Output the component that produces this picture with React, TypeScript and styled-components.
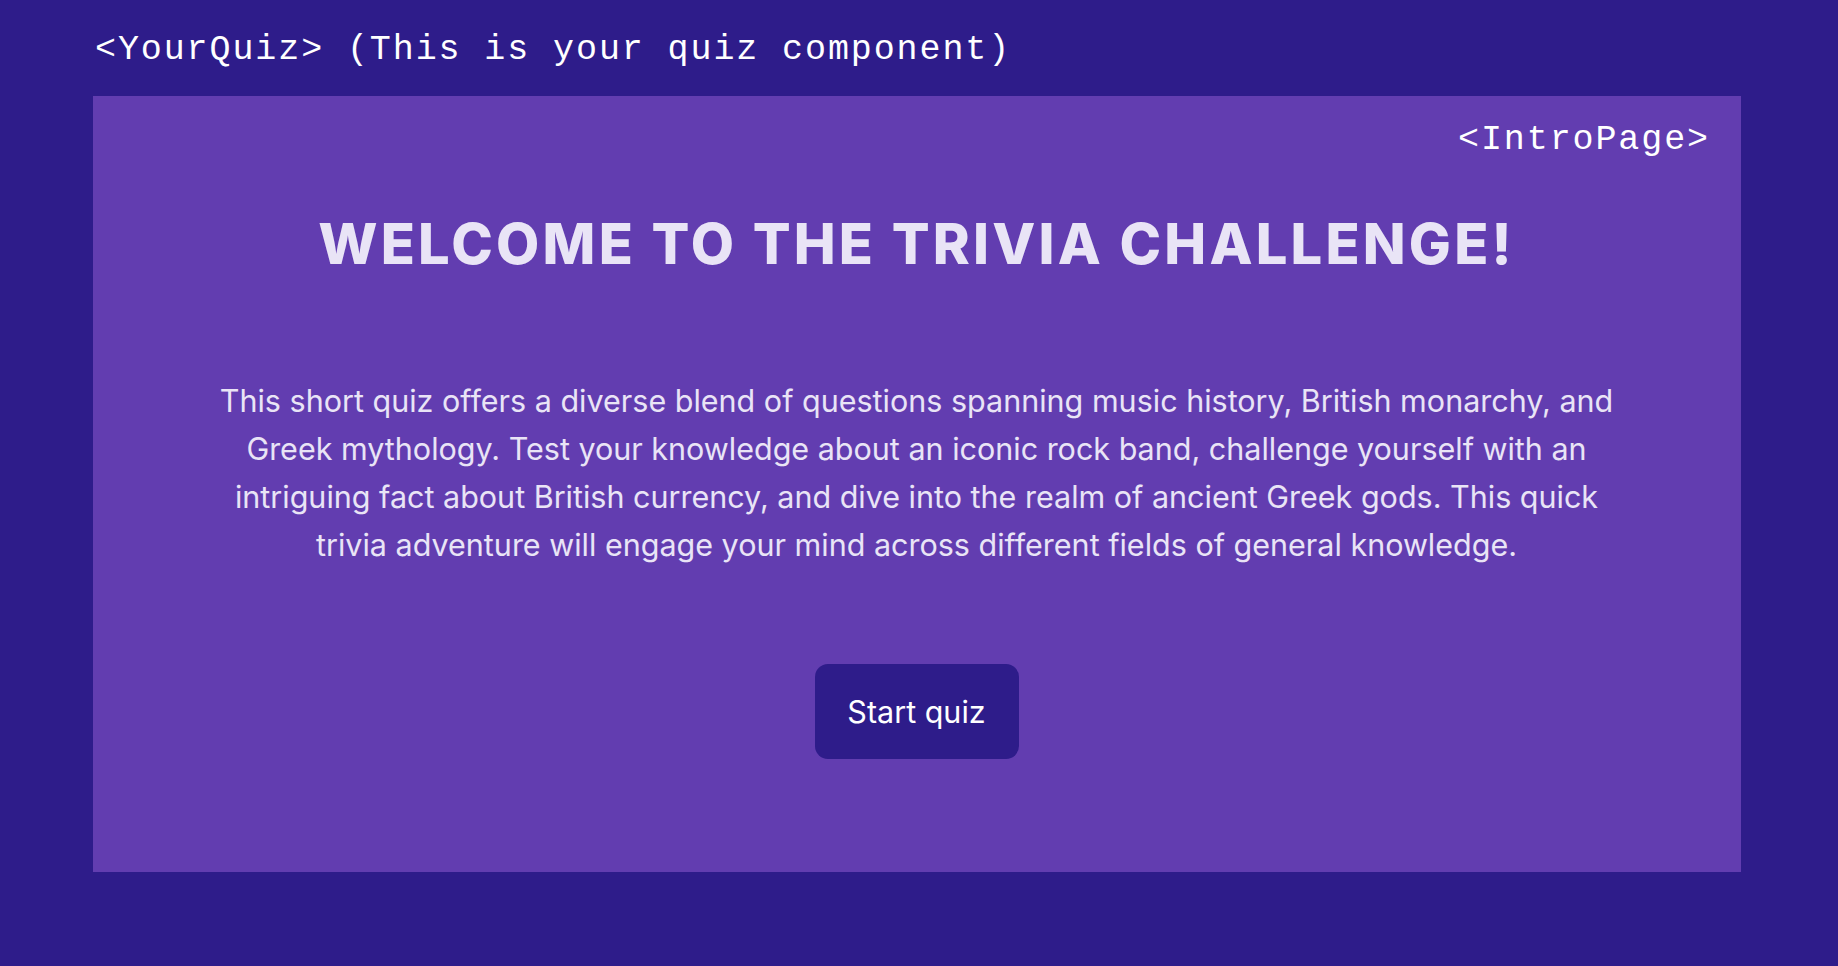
import React from "react";
import styled, { createGlobalStyle } from "styled-components";

const Global = createGlobalStyle`
  html, body {
    margin: 0;
    padding: 0;
    background: #2e1c8a;
  }
  * { box-sizing: border-box; }
`;

const Page = styled.div`
  min-height: 966px;
  padding: 0 97px 0 93px;
  background: #2e1c8a;
`;

const Header = styled.div`
  height: 96px;
  display: flex;
  align-items: center;
  padding: 4px 0 0 2px;
  font-family: "Liberation Mono", "Courier New", monospace;
  font-size: 35px;
  letter-spacing: 1.9px;
  color: #ffffff;
  white-space: pre;
`;

const Panel = styled.section`
  background: #623db0;
  height: 776px;
  padding: 22px 31px 0 30px;
  display: flex;
  flex-direction: column;
  align-items: center;
`;

const Tag = styled.div`
  align-self: flex-end;
  height: 44px;
  line-height: 44px;
  font-family: "Liberation Mono", "Courier New", monospace;
  font-size: 35px;
  letter-spacing: 1.9px;
  color: #ffffff;
  white-space: pre;
`;

const Title = styled.h1`
  margin: 49px 0 0;
  font-family: Inter, "Noto Sans", sans-serif;
  font-weight: 800;
  font-size: 56px;
  line-height: 67px;
  letter-spacing: 3.2px;
  color: #e9e4f6;
  text-align: center;
  text-transform: uppercase;
`;

const Blurb = styled.p`
  margin: 99px 0 0;
  width: 1425px;
  font-family: Inter, "Noto Sans", sans-serif;
  font-weight: 400;
  font-size: 30.5px;
  line-height: 48px;
  color: #e9e4f6;
  text-align: center;
`;

const StartButton = styled.button`
  margin-top: 95px;
  width: 204px;
  height: 95px;
  border: none;
  border-radius: 13px;
  background: #2e1c8a;
  color: #ffffff;
  font-family: Inter, "Noto Sans", sans-serif;
  font-size: 30.5px;
  cursor: pointer;
`;

export default function App() {
  return (
    <>
      <Global />
      <Page>
        <Header>{"<YourQuiz> (This is your quiz component)"}</Header>
        <Panel>
          <Tag>{"<IntroPage>"}</Tag>
          <Title>Welcome to the Trivia Challenge!</Title>
          <Blurb>
            This short quiz offers a diverse blend of questions spanning music
            history, British monarchy, and Greek mythology. Test your knowledge
            about an iconic rock band, challenge yourself with an intriguing
            fact about British currency, and dive into the realm of ancient
            Greek gods. This quick trivia adventure will engage your mind across
            different fields of general knowledge.
          </Blurb>
          <StartButton>Start quiz</StartButton>
        </Panel>
      </Page>
    </>
  );
}
